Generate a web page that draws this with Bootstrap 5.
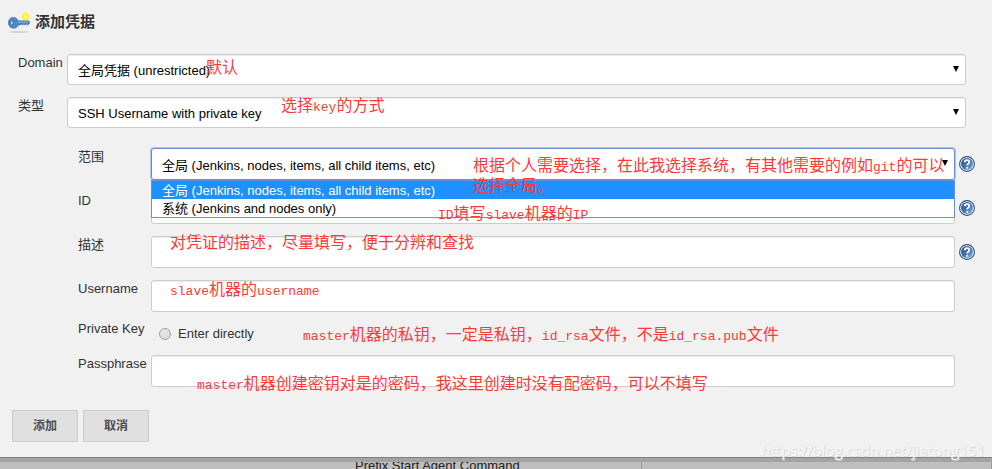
<!DOCTYPE html>
<html lang="zh-CN">
<head>
<meta charset="utf-8">
<meta name="viewport" content="width=device-width, initial-scale=1">
<title>添加凭据</title>
<link href="https://cdn.jsdelivr.net/npm/bootstrap@5.3.0/dist/css/bootstrap.min.css" rel="stylesheet">
<style>
body{font-family:"Liberation Sans","Noto Sans CJK SC",sans-serif;font-size:13px;line-height:16px;color:#333;background:#bfbfbf}
.dialog-panel{background:#f1f1f1;border-bottom:1px solid #808080;box-shadow:0 4px 0 #a3a3a3;padding:10px 12px 15px;z-index:1}
.dialog-title{font-size:15px;line-height:24px;color:#333;margin:0 0 20px -4px;gap:5px}
.outer-rows{padding:0 14px 0 6px}
.field-row{margin-bottom:12px}
.outer-label{width:49px;padding-top:1px}
.inner-rows{margin:20px -9px 0 60px}
.inner-label{width:73px;padding-top:1px}
.help-slot{width:20px;padding:8px 0 0 4px}
.help-slot button{width:16px;height:16px}
.help-slot svg{display:block}
.field-box{display:block;width:100%;height:32px;border:1px solid #ccc;border-radius:3px;background:#fff;box-shadow:inset 0 1px 1px rgba(0,0,0,.075);padding:0 10px;color:#000;font-size:13px;line-height:20px}
select.field-box{appearance:none;padding-top:3px}
.outer-field,.outer-field .field-box{height:31px}
.scope-field{border-color:#6b8ed6;box-shadow:0 0 0 1px #a8c4f5}
.field-box:focus{outline:0}
.arrow::after{content:"";position:absolute;right:7px;top:12px;border:solid transparent;border-width:6px 3px 0;border-top-color:#000}
.option-menu{top:32px;left:0;right:0;border:1px solid #6b8ed6;background:#fff;z-index:2}
.option-menu button{height:18px;padding:0 10px;border:0;background:#fff;color:#000;line-height:20px}
.option-menu button.chosen{background:#1e90ff;color:#fff}
.annotation{position:absolute;z-index:3;font-family:"Noto Sans CJK SC",sans-serif;font-size:16px;line-height:20px;color:#ff3838;pointer-events:none;white-space:nowrap}
.annotation span{font-family:"Liberation Mono",monospace;font-size:13px;line-height:1}
.note-domain{left:139px;top:2px}
.note-type{left:214px;top:-3px}
.note-scope{left:322px;top:6px;width:480px;white-space:normal}
.note-id{left:287px;top:10px}
.note-desc{left:19px;top:-5px}
.note-user{left:19px;top:-2px}
.note-key{left:152px;top:3px}
.note-pass{left:46px;top:17px}
.key-row{margin-top:-4px;height:23px}
.key-choice{padding:6px 0 0 8px;gap:7px;line-height:16px}
.key-choice input{appearance:none;width:12px;height:12px;margin:0;border:1px solid #a0a0a0;border-radius:50%;background:linear-gradient(#e6e6e6,#dcdcdc)}
.action-btn{min-width:66px;height:32px;border:1px solid #ccc;background:#e0e0e0;color:#4d4d4d;font-size:12px;font-weight:700}
.action-bar{margin-top:23px;gap:5px}
.watermark{right:7px;bottom:-3px;font-family:"Open Sans",sans-serif;font-size:15px;line-height:20px;color:#f4f4f4;text-shadow:1px 1px 1px #d4d4d4}
.page-behind{color:#222;height:11px;padding-left:355px}
.behind-label{width:286px}
.behind-input{height:30px;border:1px solid #999;border-radius:3px 0 0 0;background:#bfbfbf}
</style>
<script src="https://cdn.jsdelivr.net/npm/bootstrap@5.3.0/dist/js/bootstrap.bundle.min.js"></script>
</head>
<body class="d-flex flex-column min-vh-100 overflow-hidden">
<svg width="0" height="0" class="position-absolute" aria-hidden="true">
<defs>
<linearGradient id="hg" x1="0" y1="0" x2="1" y2="1"><stop offset="0" stop-color="#2a4f86"/><stop offset=".5" stop-color="#4470ab"/><stop offset="1" stop-color="#8db5e2"/></linearGradient>
<symbol id="help" viewBox="0 0 16 16"><circle cx="8" cy="8" r="7.4" fill="#fff" stroke="#2b5085" stroke-width="1.1"/><circle cx="8" cy="8" r="6" fill="url(#hg)"/><path d="M5.7 6.3C5.8 3.3 10.4 3.4 10.3 6c0 1.6-2.1 1.7-2.1 3.4M8.2 11v1.7" fill="none" stroke="#fff" stroke-width="1.8"/></symbol>
</defs>
</svg>
<main class="dialog-panel position-relative">
<h1 class="dialog-title d-flex align-items-center fw-bold">
<svg width="22" height="24" viewBox="0 0 22 24" aria-hidden="true"><ellipse cx="11" cy="22" rx="10" ry="1" fill="#c9c9c9" opacity=".7"/><circle cx="17.5" cy="6.5" r="3.8" fill="#fff23f"/><circle cx="17.5" cy="6.5" r="1.5" fill="#fff9a0"/><path d="M5.3 7.5C2 7.5.5 10 .5 12.8s1.7 5.4 5 5.4c2.400 0 4-1.300 4.800-3.300h2.200l1-1 1.200 1 1.200-1 1.300 1 1.200-1 1.200 1 1.700-1.300.2-1.800-.9-.9H10.200C9.300 8.700 7.600 7.500 5.300 7.500z" fill="#4f88c8" stroke="#3d6ea9" stroke-width=".8"/><path d="M10 12.200h10" stroke="#8fb4de"/><ellipse cx="3.800" cy="12.900" rx="1.300" ry="2" fill="#e9f0f8" stroke="#315f99" stroke-width=".8"/></svg>
<span>添加凭据</span></h1>
<form class="outer-rows">
<div class="field-row d-flex">
<label class="outer-label flex-shrink-0" for="domain">Domain</label>
<div class="position-relative flex-grow-1 arrow outer-field"><select id="domain" class="field-box"><option>全局凭据 (unrestricted)</option></select><div class="annotation note-domain">默认</div></div>
</div>
<div class="field-row d-flex">
<label class="outer-label flex-shrink-0" for="kind">类型</label>
<div class="position-relative flex-grow-1 arrow outer-field"><select id="kind" class="field-box"><option>SSH Username with private key</option></select><div class="annotation note-type">选择<span>key</span>的方式</div></div>
</div>
<div class="inner-rows">
<div class="field-row d-flex">
<label class="inner-label flex-shrink-0" for="scope">范围</label>
<div class="position-relative flex-grow-1 arrow"><select id="scope" class="field-box scope-field"><option>全局 (Jenkins, nodes, items, all child items, etc)</option><option>系统 (Jenkins and nodes only)</option></select>
<div class="option-menu position-absolute" role="listbox" aria-label="范围"><button type="button" role="option" aria-selected="true" class="chosen d-block w-100 text-start">全局 (Jenkins, nodes, items, all child items, etc)</button><button type="button" role="option" aria-selected="false" class="d-block w-100 text-start">系统 (Jenkins and nodes only)</button></div>
<div class="annotation note-scope">根据个人需要选择，在此我选择系统，有其他需要的例如<span>git</span>的可以选择全局。</div></div>
<div class="help-slot flex-shrink-0"><button type="button" class="border-0 bg-transparent p-0 d-block" aria-label="帮助"><svg width="16" height="16"><use href="#help"/></svg></button></div>
</div>
<div class="field-row d-flex">
<label class="inner-label flex-shrink-0" for="cid">ID</label>
<div class="position-relative flex-grow-1"><input id="cid" type="text" class="field-box"><div class="annotation note-id"><span>ID</span>填写<span>slave</span>机器的<span>IP</span></div></div>
<div class="help-slot flex-shrink-0"><button type="button" class="border-0 bg-transparent p-0 d-block" aria-label="帮助"><svg width="16" height="16"><use href="#help"/></svg></button></div>
</div>
<div class="field-row d-flex">
<label class="inner-label flex-shrink-0" for="desc">描述</label>
<div class="position-relative flex-grow-1"><input id="desc" type="text" class="field-box"><div class="annotation note-desc">对凭证的描述，尽量填写，便于分辨和查找</div></div>
<div class="help-slot flex-shrink-0"><button type="button" class="border-0 bg-transparent p-0 d-block" aria-label="帮助"><svg width="16" height="16"><use href="#help"/></svg></button></div>
</div>
<div class="field-row d-flex">
<label class="inner-label flex-shrink-0" for="user">Username</label>
<div class="position-relative flex-grow-1"><input id="user" type="text" class="field-box"><div class="annotation note-user"><span>slave</span>机器的<span>username</span></div></div>
<div class="help-slot flex-shrink-0"></div>
</div>
<div class="field-row key-row d-flex">
<div class="inner-label flex-shrink-0">Private Key</div>
<div class="position-relative flex-grow-1"><div class="key-choice d-flex align-items-center"><input id="direct" type="radio" name="key"><label for="direct">Enter directly</label></div><div class="annotation note-key"><span>master</span>机器的私钥，一定是私钥，<span>id_rsa</span>文件，不是<span>id_rsa.pub</span>文件</div></div>
</div>
<div class="field-row d-flex">
<label class="inner-label flex-shrink-0" for="pass">Passphrase</label>
<div class="position-relative flex-grow-1"><input id="pass" type="password" class="field-box"><div class="annotation note-pass"><span>master</span>机器创建密钥对是的密码，我这里创建时没有配密码，可以不填写</div></div>
<div class="help-slot flex-shrink-0"></div>
</div>
</div>
</form>
<div class="action-bar d-flex"><button type="button" class="action-btn">添加</button><button type="button" class="action-btn">取消</button></div>
<div class="watermark position-absolute">https://blog.csdn.net/jiatong151</div>
</main>
<div class="page-behind d-flex flex-grow-1 overflow-hidden"><label class="behind-label flex-shrink-0" for="prefix">Prefix Start Agent Command</label><input id="prefix" type="text" class="behind-input flex-grow-1"></div>
</body>
</html>
